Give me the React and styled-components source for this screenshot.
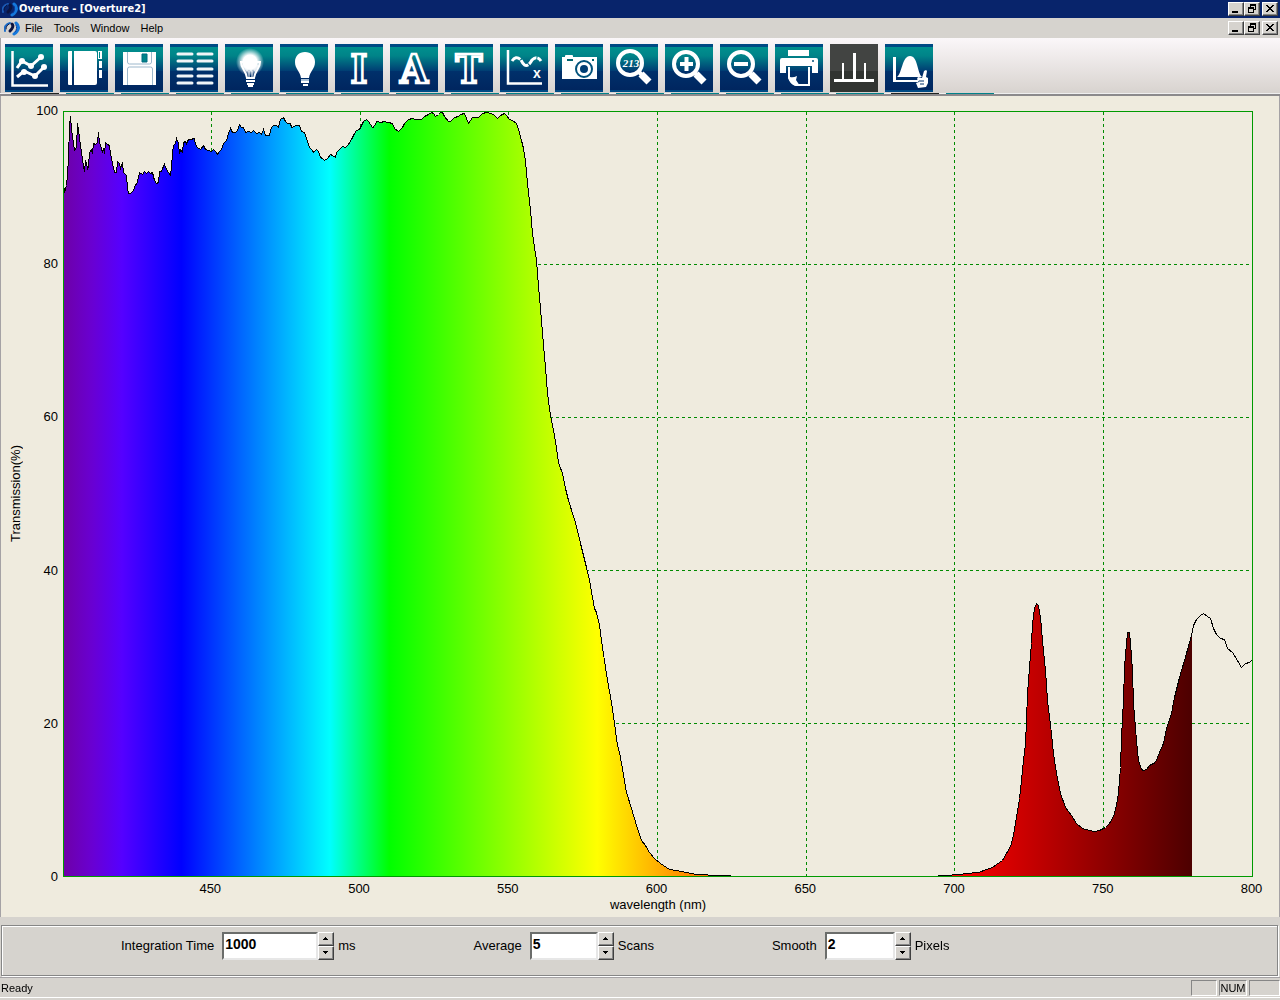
import React from 'react';
import styled, { createGlobalStyle, css } from 'styled-components';

const GlobalStyle = createGlobalStyle`
    * {
        box-sizing: border-box;
    }

    body {
        margin: 0;
        background-color: #d6d3ce;
        font-family: 'Liberation Sans', Arial, sans-serif;
        color: #000;
    }

    button, input {
        font-family: inherit;
        color: inherit;
    }
`;

const raised = css`
    border: 1px solid;
    border-color: #fff #404040 #404040 #fff;
    box-shadow: inset -1px -1px 0 #868686;
    background-color: #d6d3ce;
`;

const Window = styled.div`
    display: flex;
    flex-direction: column;
    height: 100vh;
    min-height: 560px;
    min-width: 1000px;
    overflow: hidden;
`;

const TitleBar = styled.header`
    display: flex;
    align-items: center;
    gap: 1px;
    height: 18px;
    padding: 0 2px;
    background-color: #08246b;
    color: #fff;
`;

const Title = styled.h1`
    flex: 1;
    margin: 0;
    font-family: 'DejaVu Sans Condensed', 'DejaVu Sans', sans-serif;
    font-size: 11px;
    line-height: 18px;
    font-weight: bold;
`;

const MenuBar = styled.nav`
    display: flex;
    align-items: center;
    height: 20px;
    padding: 0 2px 0 4px;
`;

const MenuList = styled.div`
    display: flex;
    flex: 1;
    gap: 11px;
    padding-left: 5px;
`;

const MenuItem = styled.button`
    border: none;
    padding: 0;
    background: none;
    font-size: 11px;
    line-height: 18px;
`;

const Controls = styled.div`
    display: flex;

    button:last-child {
        margin-left: 2px;
    }
`;

const ControlButton = styled.button`
    ${raised}
    display: flex;
    align-items: center;
    justify-content: center;
    width: 16px;
    height: 14px;
    padding: 0;
    color: #000;
`;

const ToolBar = styled.div`
    display: flex;
    align-items: flex-start;
    gap: 7px;
    height: 55px;
    padding: 6px 4px 0;
    border-left: 1px solid #a5a2a5;
    background: linear-gradient(#fbf7f9, #d8d3cf);
`;

const Tool = styled.button`
    width: 48px;
    height: 48px;
    padding: 0;
    border: none;
    background: ${props => props.$active
        ? 'linear-gradient(#424442 0, #424442 56%, #313431 56%, #313431)'
        : 'linear-gradient(#004a84 3px, #00908e 3px, #008388 12px, #003d73 27px, #00306b 27px, #00265f 46px, #004a84 46px)'};

    svg {
        display: block;
        overflow: visible;
    }
`;

const ToolEdge = styled.div`
    display: flex;
    gap: 7px;
    height: 3px;
    padding-left: 11px;
    border-bottom: 2px solid #8c8a8c;
    background-color: #efefef;
`;

const EdgeMark = styled.span`
    width: 48px;
    background-color: ${props => props.$dark ? '#212421' : '#00828a'};
`;

const ChartPanel = styled.main`
    display: grid;
    flex: 1;
    grid-template-columns: 30px 32px minmax(0, 1fr);
    grid-template-rows: minmax(0, 1fr) 20px 16px;
    min-height: 0;
    padding: 15px 26px 4px 0;
    border: solid #a5a2a5;
    border-width: 0 1px;
    background-color: #efebde;
    font-size: 13px;
    line-height: 16px;
`;

const YTitle = styled.div`
    align-self: center;
    justify-self: center;
    writing-mode: vertical-rl;
    transform: rotate(180deg);
`;

const YTicks = styled.div`
    display: flex;
    flex-direction: column;
    justify-content: space-between;
    margin: -8px 0;
    padding-right: 5px;
    text-align: right;
`;

const XTicks = styled.div`
    display: grid;
    grid-column: 3;
    grid-template-columns: repeat(8, 1fr);
    padding-top: 4px;
`;

const XTick = styled.div`
    display: flex;
    justify-content: center;
    justify-self: end;
    width: 3px;
`;

const XTitle = styled.div`
    grid-column: 3;
    text-align: center;
`;

const Plot = styled.svg`
    display: block;
    width: 100%;
    height: 100%;
`;

const Settings = styled.form`
    display: flex;
    gap: 118px;
    margin: 8px 2px 1px 1px;
    padding: 6px 16px 15px 119px;
    border: 1px solid #868686;
    box-shadow: 1px 1px 0 #fff, inset 1px 1px 0 #fff;
    font-size: 13px;
    line-height: 16px;
`;

const Field = styled.div`
    display: flex;
    align-items: center;
`;

const FieldLabel = styled.label`
    margin-right: 8px;
`;

const FieldInput = styled.input`
    width: ${props => props.$width}px;
    height: 28px;
    padding: 0 1px 4px;
    border: 2px solid;
    border-color: #6b6d6b #e7e7e7 #e7e7e7 #6b6d6b;
    border-radius: 0;
    outline: none;
    background-color: #fff;
    font-size: 14px;
    font-weight: bold;
`;

const Spinner = styled.div`
    display: flex;
    flex-direction: column;
    margin-right: 4px;
`;

const SpinButton = styled.button`
    ${raised}
    display: flex;
    align-items: center;
    justify-content: center;
    width: 16px;
    height: 14px;
    padding: 0;
`;

const StatusBar = styled.footer`
    display: flex;
    gap: 2px;
    height: 23px;
    padding: 2px 0;
    border-top: 1px solid #a5a2a5;
    border-bottom: 2px solid #d6d3ce;
    box-shadow: inset 0 -1px 0 #fff;
    font-size: 11px;
    line-height: 16px;
`;

const StatusText = styled.span`
    flex: 1;
    padding-left: 1px;
`;

const Pane = styled.span`
    width: ${props => props.$width}px;
    height: 16px;
    border: 1px solid;
    border-color: #868686 #fff #fff #868686;
    line-height: 15px;
    text-align: center;
`;

function Logo({ dark }) {
    return (
        <svg width="16" height="16" viewBox="0 0 16 16" fill="none" strokeLinecap="round">
            <path d="M6 3C2 4 0 7 1 11" stroke={dark ? '#1c5cb8' : '#1a6cc8'} strokeWidth="2" />
            <path d="M5 4C3 5 2 7 2 9" stroke="#0b1440" strokeWidth="1" />
            <path d="M8 4C10 6 8 9 6 11" stroke="#0b1440" strokeWidth="3" />
            <path d="M12 3c4 3 3 8-2 11" stroke="#1478dc" strokeWidth="3" />
            <path d="M12 5c1 2 1 5-1 7" stroke="#0a3c9c" strokeWidth="1" />
        </svg>
    );
}

function WindowControls({ name }) {
    return (
        <Controls>
            <ControlButton aria-label={`Minimize ${name}`}>
                <svg width="12" height="10" shapeRendering="crispEdges"><path d="M2 7h6v2H2z" /></svg>
            </ControlButton>
            <ControlButton aria-label={`Restore ${name}`}>
                <svg width="12" height="10" shapeRendering="crispEdges">
                    <path d="M4 0h6v6H8V5h1V2H5v1H4zM2 3h6v6H2zM3 5v3h4V5z" fillRule="evenodd" />
                </svg>
            </ControlButton>
            <ControlButton aria-label={`Close ${name}`}>
                <svg width="12" height="10" shapeRendering="crispEdges">
                    <path d="M2 1h2v1h1v1h2V2h1V1h2v1H9v1H8v1H7v1h1v1h1v1h1v1H8V7H7V6H5v1H4v1H2V7h1V6h1V5h1V4H4V3H3V2H2z" />
                </svg>
            </ControlButton>
        </Controls>
    );
}

function Letter({ children }) {
    return (
        <text x="24" y="39" textAnchor="middle" fontFamily="DejaVu Serif Condensed, DejaVu Serif, serif" fontWeight="bold"
            fontSize="40" fill="none" stroke="#fff" strokeWidth="2.500">{children}</text>
    );
}

function Lens({ x, y, r, children }) {
    return (
        <g>
            <circle cx={x} cy={y} r={r} fill="none" stroke="#fff" strokeWidth="4" />
            <path d="M29 28l4 4" stroke="#fff" strokeWidth="4" />
            <path d="M31 30l8 8" stroke="#fff" strokeWidth="7" />
            {children}
        </g>
    );
}

const tools = [
    {
        name: 'Spectra',
        icon: (
            <g fill="none" stroke="#fff">
                <path d="M7.500 7v34.500H43" strokeWidth="2.500" />
                <path d="M12 24l5-7 9 5 10-9M12 33l7-6 11 5 9-9" strokeWidth="3" />
                <g fill="#fff" stroke="none">
                    <circle cx="17" cy="17" r="3" /><circle cx="26" cy="22" r="3" /><circle cx="36" cy="13" r="3" />
                    <circle cx="19" cy="28" r="3" /><circle cx="30" cy="32" r="3" /><circle cx="39" cy="23" r="3" />
                </g>
            </g>
        ),
    },
    {
        name: 'Notebook',
        icon: (
            <g fill="#fff">
                <path d="M9 7h3v34H9q-1 0-1-1V8q0-1 1-1zM14 7h1v34h-1zM15 7h20q2 0 2 2v30q0 2-2 2H15z" />
                <path d="M38 7h4v1h-3v6h3v1h-4zM39 17h3v7h-3zM39 26h3v8h-3z" />
                <path d="M40 8h2v6h-2z" />
            </g>
        ),
    },
    {
        name: 'Save',
        icon: (
            <g fill="none" stroke="#9db8cc">
                <path d="M8 8h33v33H8z" fill="#fff" stroke="none" />
                <path d="M12.500 8v10q0 2 2 2h20q2 0 2-2V8M12.500 41V25q0-2 2-2h21q2 0 2 2v16" />
                <path d="M27 10h5v8h-5z" fill="#00848a" stroke="#006a80" />
            </g>
        ),
    },
    {
        name: 'Data table',
        icon: (
            <path d="M8 10h14M28 10h14M8 17h14M28 17h14M8 25h14M28 25h14M8 32h14M28 32h14M8 39h14M28 39h14"
                stroke="#f1f5f8" strokeWidth="3" strokeLinecap="round" />
        ),
    },
    {
        name: 'Lamp on',
        icon: (
            <g>
                <radialGradient id="glow">
                    <stop offset="0.500" stopColor="#fff" />
                    <stop offset="1" stopColor="#fff" stopOpacity="0" />
                </radialGradient>
                <circle cx="25" cy="18" r="14" fill="url(#glow)" />
                <path d="M16 18c0 7 5 8 6 16h7c1-8 6-9 6-16z" fill="none" stroke="#fff" strokeWidth="2" />
                <path d="M17 21h17l-4 7-2-3-2 3-2-3-2 3z" fill="#fff" opacity="0.700" />
                <path d="M24 34v-7M27 34v-7" stroke="#fff" />
                <path d="M21 37h9M22 40h7M23 42h5" stroke="#fff" strokeWidth="2" />
            </g>
        ),
    },
    {
        name: 'Lamp off',
        icon: (
            <g>
                <path d="M25 8c6 0 10 4 10 10 0 7-5 9-6 16h-8c-1-7-6-9-6-16 0-6 4-10 10-10z" fill="#fff" />
                <path d="M21 36h8" stroke="#a9c0d6" strokeWidth="2" />
                <path d="M21 38h8M23 41h5" stroke="#fff" strokeWidth="2" />
            </g>
        ),
    },
    { name: 'Irradiance', icon: <Letter>I</Letter> },
    { name: 'Absorbance', icon: <Letter>A</Letter> },
    { name: 'Transmission', icon: <Letter>T</Letter> },
    {
        name: 'Baseline',
        icon: (
            <g>
                <path d="M8 6v33.500h34" fill="none" stroke="#fff" strokeWidth="2.500" />
                <path d="M12 17q4-6 9-1 5 11 11 0 5-5 9 1" fill="none" stroke="#fff" strokeWidth="3" strokeDasharray="10 1" />
                <text x="37" y="34" textAnchor="middle" fontSize="14" fontWeight="bold" fill="#fff">x</text>
            </g>
        ),
    },
    {
        name: 'Snapshot',
        icon: (
            <g>
                <path d="M7 13h3v-1q0-1 1-1h6q1 0 1 1v1h24v22H7z" fill="#fff" />
                <path d="M12 16h6" stroke="#00646f" strokeWidth="2" />
                <path d="M37 15h2v2h-2z" fill="#00646f" />
                <circle cx="29" cy="25" r="8" fill="none" stroke="#00517a" strokeWidth="2" />
                <circle cx="29" cy="25" r="4" fill="#003d73" />
            </g>
        ),
    },
    {
        name: 'Zoom values',
        icon: (
            <Lens x={20} y={19} r={12}>
                <text x="21" y="23" textAnchor="middle" fontFamily="Liberation Serif, serif" fontSize="11"
                    fontWeight="bold" fontStyle="italic" fill="#fff">213</text>
            </Lens>
        ),
    },
    { name: 'Zoom in', icon: <Lens x={21} y={20} r={12}><path d="M15 20h13M21.500 13v14" stroke="#fff" strokeWidth="4" /></Lens> },
    { name: 'Zoom out', icon: <Lens x={21} y={20} r={12}><path d="M14 20h14" stroke="#fff" strokeWidth="4" /></Lens> },
    {
        name: 'Print',
        icon: (
            <g>
                <path d="M13 6h21v6H13z" fill="#fff" />
                <path d="M7 14h34q2 0 2 2v13h-6v-7H11v7H5V16q0-2 2-2z" fill="#fff" />
                <circle cx="38" cy="17" r="1" fill="#00517a" />
                <path d="M14 23v11q3 7 9 7h11V23" fill="none" stroke="#fff" strokeWidth="2" />
                <path d="M13 32l2 1q3 1 7-1l-1 4 4 6h-4q-6-1-8-10z" fill="#fff" />
            </g>
        ),
    },
    {
        name: 'Peaks',
        active: true,
        icon: <path d="M4 35h8V19h2v16h9V9h3v26h8V19h2v16h8v3H4z" fill="#fff" />,
    },
    {
        name: 'Pick area',
        icon: (
            <g fill="#fff">
                <path d="M8 13h3v23h22v2H8z" />
                <path d="M12 33c5-3 5-21 13-21s7 17 12 21z" />
                <path d="M39 27l2-1 1 1-1 6 2 1v5l-2 4-8 1-2-5 3-1-2-3 1-2 4 1z" />
                <path d="M34 37h5M35 40h4" stroke="#00306b" />
            </g>
        ),
    },
];

// Measured curve, in plot units: 1189 across (400-800 nm), 765 down (100-0 %)
const curve = `1,71 2,81 4,74 5,64 6,46 7,15 8,5 9,17 10,26 11,31 12,39 14,36 15,12 16,19 18,34 19,40 20,49
22,60 23,50 24,52 25,57 26,55 27,41 29,38 30,42 31,32 33,33 34,32 35,31 36,21 37,31 39,37 40,41 41,37 42,42
43,31 45,33 47,34 48,42 50,52 52,61 54,61 55,50 57,52 58,57 60,51 61,61 64,64 65,76 66,82 68,82 71,79 73,73
74,73 76,66 77,61 80,63 82,60 84,62 86,60 88,62 90,61 92,69 94,72 96,71 97,60 99,60 100,57 102,53 104,58
106,61 108,64 109,56 110,42 111,34 113,32 114,27 116,32 117,42 118,38 120,41 121,31 123,30 124,32 126,28
128,28 132,27 133,33 135,36 138,38 141,34 143,38 146,39 149,40 151,38 154,41 155,43 157,40 159,38 161,32
164,29 166,22 168,17 170,21 173,21 175,19 176,16 177,13 179,16 181,16 183,21 186,20 189,21 191,19 194,22
197,21 199,23 201,18 203,24 207,24 209,16 211,14 214,14 216,16 218,8 221,6 223,10 225,12 228,12 229,16
234,14 237,14 239,20 242,21 244,27 247,36 250,39 251,41 254,38 256,40 258,46 260,47 262,49 265,47 268,43
270,44 273,46 274,41 277,38 280,35 283,36 286,33 289,28 292,22 294,19 297,18 299,14 301,10 304,8 306,10
310,16 312,15 314,10 319,11 321,10 326,11 330,12 332,17 336,20 340,16 342,12 346,8 350,7 353,8 359,8 362,5
366,3 369,1 371,2 373,5 376,3 378,1 380,1 382,5 386,10 388,10 392,6 396,5 398,3 402,2 404,7 406,12 410,6
416,6 420,2 424,1 429,2 432,4 435,7 438,4 442,2 444,4 447,8 450,9 454,12 456,18 459,29 461,37 463,49 464,62
466,81 468,99 470,122 472,136 474,149 475,162 477,186 479,209 481,234 483,256 485,282 487,297 489,309
492,324 494,337 496,351 500,362 503,377 506,389 512,408 515,419 519,436 524,456 527,469 530,486 532,497
534,501 537,514 540,536 545,569 549,591 552,612 555,634 557,641 560,657 564,681 569,697 574,714 579,729
583,734 587,741 592,747 598,752 607,758 614,759 624,761 634,763 657,764 680,765 870,765 882,764 897,763
904,762 916,761 924,758 930,756 934,753 940,749 944,742 948,735 951,724 954,706 957,687 959,669 961,649
963,632 964,609 965,582 967,556 969,532 970,512 972,497 974,492 976,494 978,506 980,529 983,559 985,589
989,622 991,642 994,662 998,682 1003,696 1009,704 1014,712 1020,717 1027,719 1032,720 1037,719 1043,716
1047,712 1051,705 1054,694 1056,681 1058,656 1059,626 1061,589 1062,556 1064,532 1065,521 1067,521 1068,532
1070,559 1071,592 1074,629 1076,649 1079,658 1081,659 1084,658 1087,654 1093,651 1097,641 1101,632 1104,617
1109,602 1112,586 1117,566 1122,549 1129,524 1131,514 1134,508 1138,504 1141,502 1145,505 1148,507 1151,517
1154,523 1158,527 1162,528 1165,537 1170,541 1175,549 1179,556 1183,552 1187,551 1189,549`
    .split(/\s+/)
    .map(pair => pair.split(',').map(Number));

const VISIBLE_END = 1129;

// Approximate sRGB colour of a wavelength in nm
function wavelengthColor(nm) {
    let rgb;
    if (nm < 440) rgb = [(440 - nm) / 60, 0, 1];
    else if (nm < 490) rgb = [0, (nm - 440) / 50, 1];
    else if (nm < 510) rgb = [0, 1, (510 - nm) / 20];
    else if (nm < 580) rgb = [(nm - 510) / 70, 1, 0];
    else if (nm < 645) rgb = [1, (645 - nm) / 65, 0];
    else rgb = [1, 0, 0];

    let level = 1;
    if (nm < 420) level = 0.3 + 0.7 * (nm - 380) / 40;
    if (nm > 700) level = 0.3 + 0.7 * (780 - nm) / 80;
    return `rgb(${rgb.map(c => Math.round(c * level * 255)).join(',')})`;
}

const stops = [400, 410, 420, 440, 490, 510, 580, 645, 700, 780];

function SpectrumPlot() {
    const line = curve.map(p => p.join(',')).join(' ');
    const area = curve.filter(([x]) => x <= VISIBLE_END).map(p => p.join(',')).join(' ');
    return (
        <Plot viewBox="0 0 1190 766" preserveAspectRatio="none" shapeRendering="crispEdges" role="img" aria-label="Transmission spectrum">
            <defs>
                <linearGradient id="spectrum" gradientUnits="userSpaceOnUse" x1="0" x2={VISIBLE_END} y1="0" y2="0">
                    {stops.map(nm => (
                        <stop key={nm} offset={(nm - 400) / 380} stopColor={wavelengthColor(nm)} />
                    ))}
                </linearGradient>
            </defs>
            <g transform="translate(0.5 0.5)" fill="none">
                <g stroke="#008a00" strokeDasharray="3 3">
                    {[148, 297, 445, 594, 743, 891, 1040].map(x => <path key={x} d={`M${x} 0V765`} />)}
                    {[153, 306, 459, 612].map(y => <path key={y} d={`M0 ${y}H1189`} />)}
                </g>
                <g transform="translate(-1 0)">
                    <polygon points={`1,765 ${area} ${VISIBLE_END},765`} fill="url(#spectrum)" />
                    <polyline points={line} stroke="#000" />
                </g>
                <path d="M0 0H1189V765H0z" stroke="#009a00" />
            </g>
        </Plot>
    );
}

function NumberField({ id, label, unit, width, value, focused }) {
    return (
        <Field>
            <FieldLabel htmlFor={id}>{label}</FieldLabel>
            <FieldInput id={id} type="text" defaultValue={value} $width={width} autoFocus={focused} />
            <Spinner>
                <SpinButton type="button" aria-label={`Increase ${label}`}>
                    <svg width="6" height="4" shapeRendering="crispEdges"><path d="M2 0h1v1h1v1h1v1H0V2h1V1h1z" /></svg>
                </SpinButton>
                <SpinButton type="button" aria-label={`Decrease ${label}`}>
                    <svg width="6" height="4" shapeRendering="crispEdges"><path d="M0 0h5v1H4v1H3v1H2V2H1V1H0z" /></svg>
                </SpinButton>
            </Spinner>
            <span>{unit}</span>
        </Field>
    );
}

function App() {
    return (
        <>
            <GlobalStyle />
            <Window>
                <TitleBar>
                    <Logo dark />
                    <Title>Overture - [Overture2]</Title>
                    <WindowControls name="application" />
                </TitleBar>
                <MenuBar>
                    <Logo />
                    <MenuList>
                        {['File', 'Tools', 'Window', 'Help'].map(item => <MenuItem key={item}>{item}</MenuItem>)}
                    </MenuList>
                    <WindowControls name="document" />
                </MenuBar>
                <ToolBar>
                    {tools.map(tool => (
                        <Tool key={tool.name} aria-label={tool.name} $active={tool.active}>
                            <svg width="48" height="48" viewBox="0 0 48 48">{tool.icon}</svg>
                        </Tool>
                    ))}
                </ToolBar>
                <ToolEdge>
                    {tools.map((tool, i) => <EdgeMark key={tool.name} $dark={i === 0 || i === 16} />)}
                    <EdgeMark />
                </ToolEdge>
                <ChartPanel>
                    <YTitle>Transmission(%)</YTitle>
                    <YTicks>
                        {[100, 80, 60, 40, 20, 0].map(tick => <span key={tick}>{tick}</span>)}
                    </YTicks>
                    <SpectrumPlot />
                    <XTicks>
                        {[450, 500, 550, 600, 650, 700, 750, 800].map(tick => <XTick key={tick}>{tick}</XTick>)}
                    </XTicks>
                    <XTitle>wavelength (nm)</XTitle>
                </ChartPanel>
                <Settings>
                    <NumberField id="integration" label="Integration Time" unit="ms" width={96} value="1000" />
                    <NumberField id="average" label="Average" unit="Scans" width={68} value="5" />
                    <NumberField id="smooth" label="Smooth" unit="Pixels" width={70} value="2" focused />
                </Settings>
                <StatusBar>
                    <StatusText>Ready</StatusText>
                    <Pane $width={26} />
                    <Pane $width={28}>NUM</Pane>
                    <Pane $width={31} />
                </StatusBar>
            </Window>
        </>
    );
}

export default App;
